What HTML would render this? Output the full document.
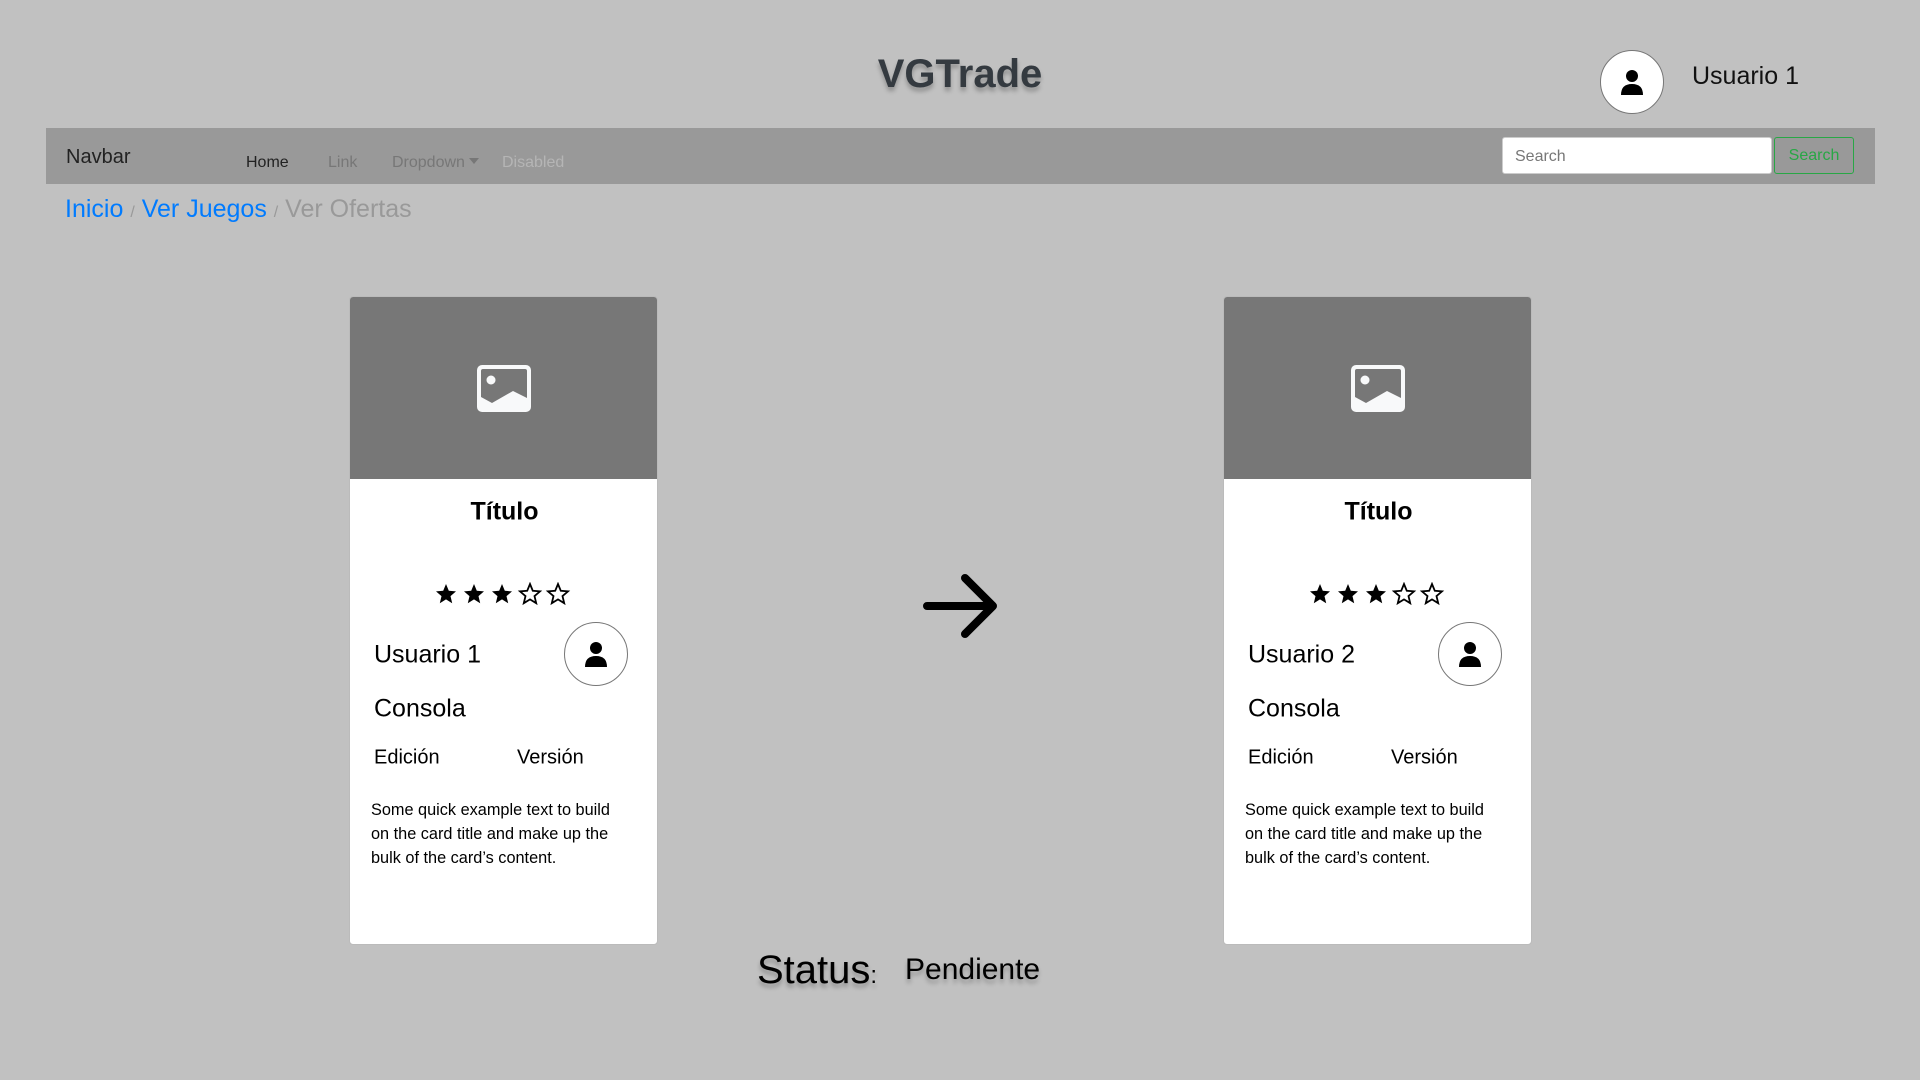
<!DOCTYPE html>
<html><head><meta charset="utf-8"><style>
*{margin:0;padding:0;box-sizing:border-box}
body{width:1920px;height:1080px;background:#c1c1c1;font-family:"Liberation Sans",sans-serif;position:relative;overflow:hidden}
.a{position:absolute;white-space:nowrap}
.circ{position:absolute;width:64px;height:64px;border-radius:50%;background:#fff;border:1px solid #777;display:flex;align-items:center;justify-content:center}
.card{position:absolute;top:296px;width:309px;height:649px;background:#fff;border-radius:4px;overflow:hidden;border:1px solid #bbb}
.card .img{height:182px;background:#777;display:flex;align-items:center;justify-content:center}
.card .a{transform:translateY(-50%)}
</style></head><body>
<svg width="0" height="0" style="position:absolute"><defs>
<path id="st" d="M12 2 L14.8 8.8 L22 9.4 L16.5 14.1 L18.2 21.2 L12 17.4 L5.8 21.2 L7.5 14.1 L2 9.4 L9.2 8.8Z"/>
</defs></svg>
<div class="a" style="left:0;width:1920px;text-align:center;top:52px;font-size:40px;font-weight:bold;color:#343a40;text-shadow:0 4px 4px rgba(0,0,0,.25)">VGTrade</div>
<div class="circ" style="left:1600px;top:50px"><svg width="22" height="26" viewBox="0 0 22 26"><circle cx="11" cy="7" r="6"/><path d="M0 26 Q0 15 11 15 Q22 15 22 26Z"/></svg></div>
<div class="a" style="left:1692px;top:62px;font-size:25px;color:#111">Usuario 1</div>
<div class="a" style="left:46px;top:128px;width:1829px;height:56px;background:#999"></div>
<div class="a" style="left:66px;top:146px;font-size:20px;color:#222">Navbar</div>
<div class="a" style="left:246px;top:154px;font-size:16px;color:#222">Home</div>
<div class="a" style="left:328px;top:154px;font-size:16px;color:#777">Link</div>
<div class="a" style="left:392px;top:154px;font-size:16px;color:#777">Dropdown <span style="display:inline-block;border:5px solid transparent;border-top:6px solid #777;vertical-align:-2px"></span></div>
<div class="a" style="left:502px;top:154px;font-size:16px;color:#b5b5b5">Disabled</div>
<div class="a" style="left:1502px;top:137px;width:270px;height:37px;background:#fff;border:1px solid #ccc;border-radius:3px;font-size:16px;color:#777;padding:10px 12px 0">Search</div>
<div class="a" style="left:1774px;top:137px;width:80px;height:37px;border:1px solid #28a745;border-radius:3px;font-size:16px;color:#28a745;text-align:center;padding-top:9px">Search</div>
<div class="a" style="left:65px;top:195px;font-size:25px;color:#999"><span style="color:#007bff">Inicio</span> <span style="font-size:16px">/</span> <span style="color:#007bff">Ver Juegos</span> <span style="font-size:16px">/</span> Ver Ofertas</div>

<div class="card" style="left:349px">
<div class="img"><svg width="54" height="47" viewBox="0 0 54 47"><rect x="0" y="0" width="54" height="47" rx="5" fill="#f8f9fa"/><rect x="4" y="4" width="46" height="39" rx="2" fill="#777"/><circle cx="14" cy="15" r="4.5" fill="#f8f9fa"/><path d="M4 32 L15 38 L36 26 L50 33 L50 43 L4 43Z" fill="#f8f9fa"/></svg></div>
<div class="a" style="left:0;width:309px;text-align:center;top:215px;font-size:25px;font-weight:bold;transform:translateY(-50%)">Título</div>
<svg class="a" style="left:84px;top:297px" width="140" height="24" viewBox="0 0 140 24"><use href="#st" x="0"/><use href="#st" x="28"/><use href="#st" x="56"/><use href="#st" x="84" fill="none" stroke="#000" stroke-width="1.8"/><use href="#st" x="112" fill="none" stroke="#000" stroke-width="1.8"/></svg>
<div class="a" style="left:24px;top:358px;font-size:25px">Usuario 1</div>
<div class="circ" style="left:214px;top:325px"><svg width="22" height="26" viewBox="0 0 22 26"><circle cx="11" cy="7" r="6"/><path d="M0 26 Q0 15 11 15 Q22 15 22 26Z"/></svg></div>
<div class="a" style="left:24px;top:412px;font-size:25px">Consola</div>
<div class="a" style="left:24px;top:461px;font-size:20px">Edición</div>
<div class="a" style="left:167px;top:461px;font-size:20px">Versión</div>
<div style="position:absolute;left:21px;top:501px;font-size:16.3px;line-height:24px;width:250px">Some quick example text to build on the card title and make up the bulk of the card’s content.</div>
</div>

<div class="card" style="left:1223px">
<div class="img"><svg width="54" height="47" viewBox="0 0 54 47"><rect x="0" y="0" width="54" height="47" rx="5" fill="#f8f9fa"/><rect x="4" y="4" width="46" height="39" rx="2" fill="#777"/><circle cx="14" cy="15" r="4.5" fill="#f8f9fa"/><path d="M4 32 L15 38 L36 26 L50 33 L50 43 L4 43Z" fill="#f8f9fa"/></svg></div>
<div class="a" style="left:0;width:309px;text-align:center;top:215px;font-size:25px;font-weight:bold;transform:translateY(-50%)">Título</div>
<svg class="a" style="left:84px;top:297px" width="140" height="24" viewBox="0 0 140 24"><use href="#st" x="0"/><use href="#st" x="28"/><use href="#st" x="56"/><use href="#st" x="84" fill="none" stroke="#000" stroke-width="1.8"/><use href="#st" x="112" fill="none" stroke="#000" stroke-width="1.8"/></svg>
<div class="a" style="left:24px;top:358px;font-size:25px">Usuario 2</div>
<div class="circ" style="left:214px;top:325px"><svg width="22" height="26" viewBox="0 0 22 26"><circle cx="11" cy="7" r="6"/><path d="M0 26 Q0 15 11 15 Q22 15 22 26Z"/></svg></div>
<div class="a" style="left:24px;top:412px;font-size:25px">Consola</div>
<div class="a" style="left:24px;top:461px;font-size:20px">Edición</div>
<div class="a" style="left:167px;top:461px;font-size:20px">Versión</div>
<div style="position:absolute;left:21px;top:501px;font-size:16.3px;line-height:24px;width:250px">Some quick example text to build on the card title and make up the bulk of the card’s content.</div>
</div>

<svg class="a" style="left:922px;top:572px" width="78" height="68" viewBox="0 0 78 68"><path d="M5 34 H71 M43 6 L71 34 L43 62" fill="none" stroke="#000" stroke-width="8" stroke-linecap="round" stroke-linejoin="round"/></svg>

<div class="a" style="left:757px;top:948px;font-size:40px;text-shadow:0 4px 4px rgba(0,0,0,.25)">Status<span style="font-size:24px">:</span></div>
<div class="a" style="left:905px;top:953px;font-size:30px;text-shadow:0 4px 4px rgba(0,0,0,.25)">Pendiente</div>
</body></html>
